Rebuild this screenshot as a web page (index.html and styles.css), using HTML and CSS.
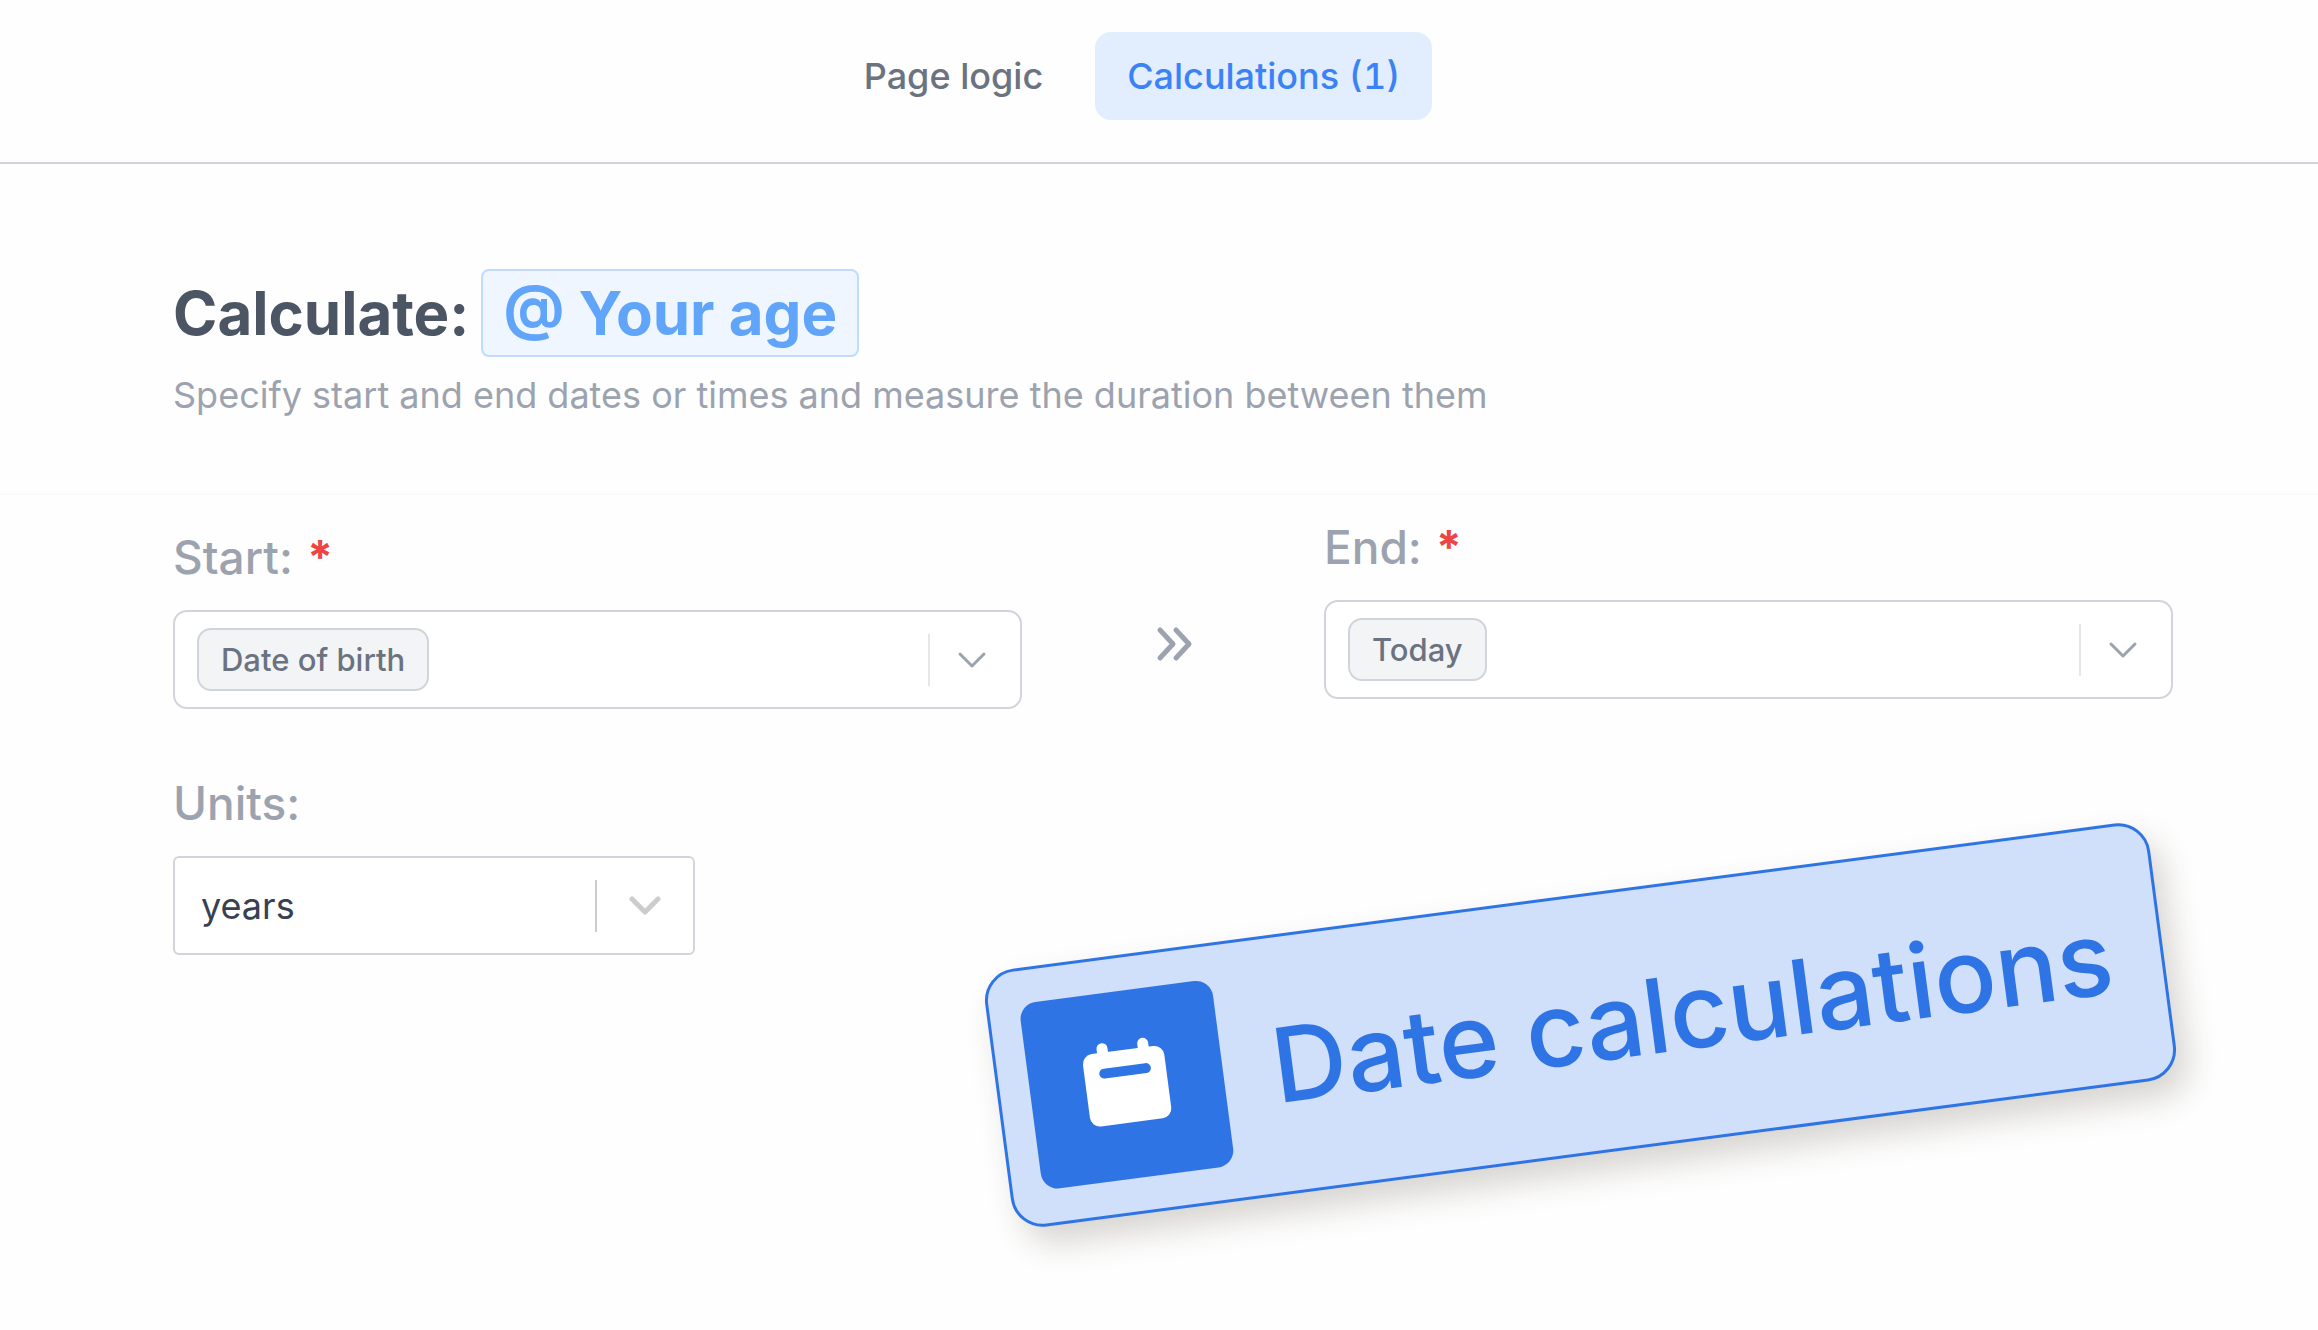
FILE: index.html
```html
<!DOCTYPE html>
<html lang="en">
<head>
   <meta charset="utf-8">
   <meta name="viewport" content="width=device-width, initial-scale=1">
   <title>Calculations</title>
   <link rel="stylesheet" href="styles.css">
</head>
<body>
   <header class="topbar">
      <nav class="tabs">
         <button class="tab" type="button">Page logic</button>
         <button class="tab tab-active" type="button">Calculations (1)</button>
      </nav>
   </header>

   <main>
      <section class="intro">
         <h1 class="title">Calculate: <span class="variable">@ Your age</span></h1>
         <p class="subtitle">Specify start and end dates or times and measure the duration between them</p>
      </section>

      <form class="form">
         <div class="range">
            <div class="field field-start">
               <label class="label" for="start">Start: <span class="required">*</span></label>
               <button class="picker" id="start" type="button" aria-haspopup="listbox">
                  <span class="chip">Date of birth</span>
                  <span class="separator"></span>
                  <svg class="chevron" viewBox="0 0 32 32"><path d="M4 10 16 22 28 10"/></svg>
               </button>
            </div>

            <svg class="arrows" viewBox="0 0 40 40"><path d="M7 6 20 20 7 34M23 6 36 20 23 34"/></svg>

            <div class="field">
               <label class="label" for="end">End: <span class="required">*</span></label>
               <button class="picker" id="end" type="button" aria-haspopup="listbox">
                  <span class="chip">Today</span>
                  <span class="separator"></span>
                  <svg class="chevron" viewBox="0 0 32 32"><path d="M4 10 16 22 28 10"/></svg>
               </button>
            </div>
         </div>

         <div class="field field-units">
            <label class="label" for="units">Units:</label>
            <div class="select-box">
               <select class="select" id="units">
                  <option>years</option>
                  <option>months</option>
                  <option>days</option>
               </select>
               <span class="separator separator-dark"></span>
               <svg class="chevron chevron-bold" viewBox="0 0 32 32"><path d="M3 9 16 22 29 9"/></svg>
            </div>
         </div>
      </form>
   </main>

   <!-- tilted sticker over the bottom right of the form -->
   <div class="sticker">
      <div class="sticker-icon">
         <svg class="calendar" viewBox="0 0 96 96">
            <rect class="calendar-page" x="7" y="13" width="82" height="73" rx="10"/>
            <path class="calendar-pin" d="M28 9v10M69 9v10"/>
            <path class="calendar-line" d="M27 34h42"/>
         </svg>
      </div>
      <span class="sticker-text">Date calculations</span>
   </div>
</body>
</html>
```
FILE: styles.css
```css
* {
   box-sizing: border-box;
}
body {
   margin: 0;
   position: relative;
   min-height: 100vh;
   background-color: #fefefe;
   font-family: Inter, "Liberation Sans", sans-serif;
   font-size: 36px;
   overflow-x: hidden;
}
button, select {
   font: inherit;
   cursor: pointer;
}

/* top tabs */
.topbar {
   padding: 32px 54px 42px 0;
   border-bottom: 2px solid #d1d5db;
}
.tabs {
   display: flex;
   justify-content: center;
   gap: 20px;
}
.tab {
   padding: 16px 32px;
   border: 0;
   border-radius: 16px;
   background: none;
   color: #6b7280;
   font-weight: 500;
   font-variant-numeric: tabular-nums;
   line-height: 56px;
}
.tab-active {
   background-color: #e2eefd;
   color: #3b82f6;
}

/* title block */
.intro {
   padding: 105px 145px 74px 173px;
   border-bottom: 2px solid #fafafa;
}
.title {
   display: flex;
   flex-wrap: wrap;
   align-items: center;
   gap: 12px;
   margin: 0;
   color: #4b5563;
   font-size: 60px;
   font-weight: 700;
   line-height: 84px;
}
.variable {
   padding: 0 20px;
   border: 2px solid #bfdbfe;
   border-radius: 8px;
   background-color: #eff6ff;
   color: #60a5fa;
}
.subtitle {
   margin: 14px 0 0;
   color: #9ca3af;
   line-height: 48px;
}

/* form */
.form {
   padding: 24px 145px 64px 173px;
}
.range {
   display: grid;
   grid-template-columns: 1fr 302px 1fr;
}
.field {
   display: flex;
   flex-direction: column;
   gap: 25px;
}
.field-start {
   padding-top: 10px;
}
.field-units {
   width: 522px;
   margin-top: 66px;
}
.label {
   color: #9ca3af;
   font-size: 46px;
   font-weight: 500;
   line-height: 56px;
}
.required {
   margin-left: 2px;
   color: #ef4444;
   font-weight: 700;
}
.picker {
   display: flex;
   align-items: center;
   width: 100%;
   height: 99px;
   padding: 0 32px 0 22px;
   border: 2px solid #d1d5db;
   border-radius: 14px;
   background-color: #fff;
}
.chip {
   padding: 0 22px;
   border: 2px solid #d1d5db;
   border-radius: 14px;
   background-color: #f3f4f6;
   color: #6b7280;
   font-size: 31px;
   font-weight: 500;
   line-height: 59px;
}
.separator {
   width: 2px;
   height: 52px;
   margin-left: auto;
   margin-right: 26px;
   background-color: #e5e7eb;
}
.separator-dark {
   margin-right: 32px;
   background-color: #ccc;
}
.chevron {
   width: 32px;
   height: 32px;
   fill: none;
   stroke: #9ca3af;
   stroke-width: 3;
   stroke-linecap: round;
   stroke-linejoin: round;
}
.chevron-bold {
   stroke: #ccc;
   stroke-width: 5;
}
.arrows {
   align-self: center;
   justify-self: center;
   width: 40px;
   height: 40px;
   margin-top: 60px;
   fill: none;
   stroke: #9ca3af;
   stroke-width: 5;
   stroke-linecap: round;
   stroke-linejoin: round;
}
.select-box {
   display: flex;
   align-items: center;
   height: 99px;
   padding-right: 32px;
   border: 2px solid #d1d5db;
   border-radius: 6px;
   background-color: #fff;
}
.select {
   flex: 1;
   height: 100%;
   padding: 0 0 0 26px;
   border: 0;
   appearance: none;
   background: none;
   color: #374151;
}

/* sticker */
.sticker {
   position: absolute;
   top: 895px;
   right: 150px;
   display: flex;
   align-items: center;
   gap: 50px;
   padding: 33px 49px 33px 30px;
   border: 3px solid #2f74e4;
   border-radius: 32px;
   background-color: #d0dffa;
   box-shadow: 10px 18px 32px rgba(60, 50, 30, 0.2);
   color: #2f74e4;
   transform: rotate(-7.5deg);
}
.sticker-icon {
   display: flex;
   align-items: center;
   justify-content: center;
   width: 194px;
   height: 188px;
   border-radius: 17px;
   background-color: #2f74e4;
}
.sticker-text {
   font-size: 103px;
   font-weight: 500;
   white-space: nowrap;
}
.calendar {
   width: 96px;
   height: 96px;
   fill: none;
   stroke-linecap: round;
}
.calendar-page {
   fill: #fff;
}
.calendar-pin {
   stroke: #fff;
   stroke-width: 11;
}
.calendar-line {
   stroke: #2f74e4;
   stroke-width: 10;
}
```
